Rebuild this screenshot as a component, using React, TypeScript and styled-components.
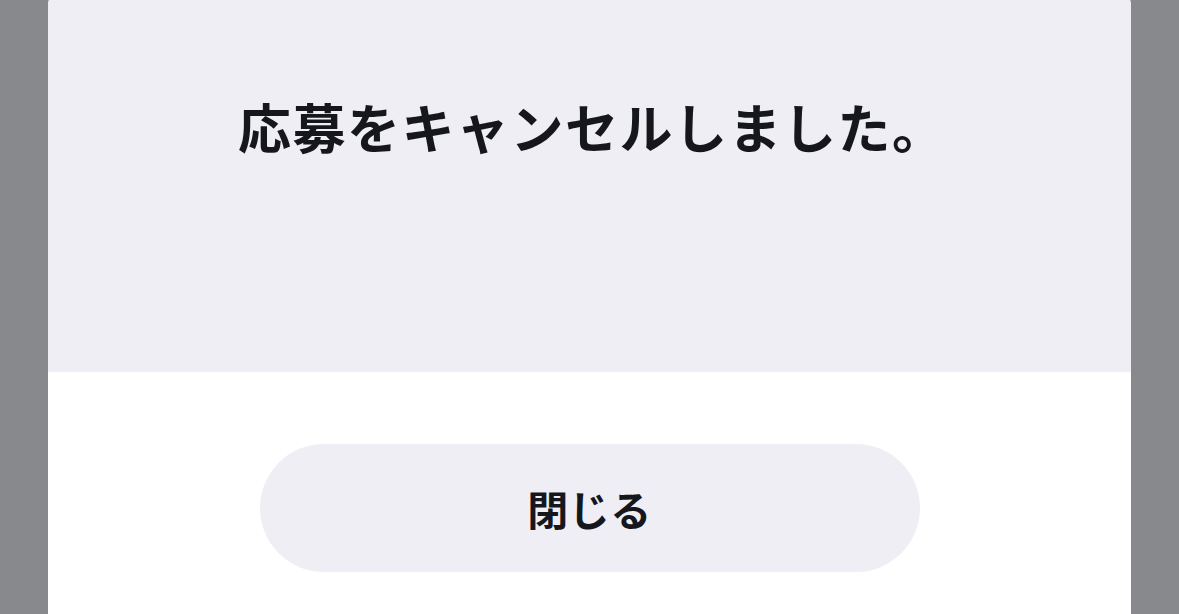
import React from 'react'
import styled, { createGlobalStyle } from 'styled-components'

const GlobalStyle = createGlobalStyle`
	html, body {
		margin: 0;
		padding: 0;
		background: #88898d;
		font-family: 'Noto Sans CJK JP', 'Noto Sans', sans-serif;
	}
`

const Overlay = styled.div`
	width: 100%;
	height: 614px;
	overflow: hidden;
	display: flex;
	justify-content: center;
	background: #88898d;
`

const Sheet = styled.div`
	width: 1083px;
	margin-top: -14px;
	height: 700px;
	background: #ffffff;
	border-radius: 20px;
	overflow: hidden;
	display: flex;
	flex-direction: column;
`

const Header = styled.div`
	height: 386px;
	box-sizing: border-box;
	background: #efeef5;
	padding: 104px 0 0 190px;

	h1 {
		margin: 0;
		font-size: 53px;
		font-weight: 700;
		line-height: 72px;
		color: #16171d;
		letter-spacing: 1.5px;
	}
`

const Footer = styled.div`
	display: flex;
	justify-content: center;
	padding-top: 72px;
`

const CloseButton = styled.button`
	width: 660px;
	height: 128px;
	border: none;
	border-radius: 64px;
	background: #efeef5;
	font-family: 'Noto Sans CJK JP', 'Noto Sans', sans-serif;
	font-size: 41px;
	font-weight: 700;
	color: #16171d;
	letter-spacing: 0.5px;
	cursor: pointer;
`

function App() {
	return (
		<>
			<GlobalStyle />
			<Overlay>
				<Sheet>
					<Header>
						<h1>応募をキャンセルしました。</h1>
					</Header>
					<Footer>
						<CloseButton>閉じる</CloseButton>
					</Footer>
				</Sheet>
			</Overlay>
		</>
	)
}

export default App
